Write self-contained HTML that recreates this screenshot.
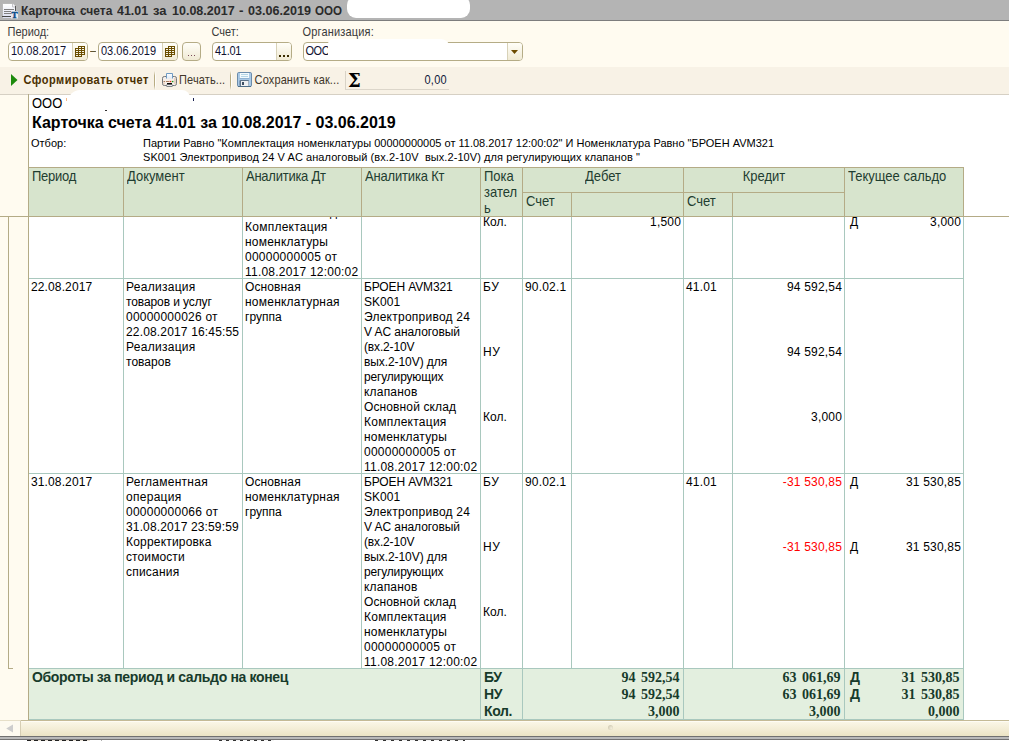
<!DOCTYPE html>
<html lang="ru">
<head>
<meta charset="utf-8">
<title>Карточка счета 41.01</title>
<style>
*{box-sizing:border-box;margin:0;padding:0}
html,body{width:1009px;height:741px;overflow:hidden;background:#fff}
body{position:relative;font-family:"Liberation Sans",sans-serif;font-size:12px;color:#000}
.abs{position:absolute}
#title{left:0;top:0;width:1009px;height:20px;background:#b4b4b4}
#titleline{left:0;top:20px;width:1009px;height:1px;background:#7d7d7d}
#title .t{left:0;top:4px;width:345px;height:14px;font-size:12px;line-height:14px;font-weight:bold;color:#2b2b2b;white-space:nowrap}
#form{left:0;top:21px;width:1009px;height:46px;background:#fffbf0}
.lbl{position:absolute;font-size:11px;line-height:13px;color:#3a3a3a;white-space:nowrap;transform:scaleY(1.12);transform-origin:0 10.3px}
.inp{position:absolute;height:19px;border:1px solid #b5ac86;border-radius:4px;background:#fff;font-size:11px;line-height:17px;padding-left:2px;white-space:nowrap;overflow:hidden;color:#101030}
.inp>span{display:inline-block;transform:translateY(0.5px) scaleY(1.12);transform-origin:0 12.3px}
.ib{position:absolute;top:0;right:0;width:15px;height:17px;border-left:1px solid #d8d2b8;background:linear-gradient(#fffef8,#f0ead4)}
.btn{position:absolute;height:19px;border:1px solid #b5ac86;border-radius:4px;background:linear-gradient(#fffef8,#f0ead4)}
#tb{left:0;top:67px;width:1009px;height:27px;background:#f8f2e6}
#tbline{left:0;top:94px;width:1009px;height:1px;background:#d6d0c4}
.tbt{position:absolute;top:7px;font-size:11px;line-height:13px;color:#40362a;white-space:nowrap;transform:scaleY(1.12);transform-origin:0 10.3px}
.sep{position:absolute;top:4px;width:2px;height:19px;background:linear-gradient(90deg,transparent 0,transparent 0) }
.sep:before{content:"";position:absolute;left:0;top:0;width:1px;height:19px;background:linear-gradient(rgba(184,172,130,0),#b8ac82 25%,#b8ac82 75%,rgba(184,172,130,0))}
.sep:after{content:"";position:absolute;left:1px;top:0;width:1px;height:19px;background:linear-gradient(rgba(255,255,255,0),#fffefb 25%,#fffefb 75%,rgba(255,255,255,0))}
#gut{left:0;top:95px;width:28px;height:625px;background:#fffbf0}
.vl{position:absolute;width:1px}
.hl{position:absolute;height:1px}
.h{position:absolute;font-size:13px;line-height:16px;color:#1f3d30;white-space:nowrap}
.h>span,.h>i{display:block;font-style:normal;height:16px;transform:scaleY(1.09);transform-origin:0 12.3px}
.g{background:#a9c8be}
.c{position:absolute;font-size:12px;line-height:15px;white-space:nowrap}
.r{text-align:right}
.n{letter-spacing:0.18px}
.red{color:#ff0000}
.ft{position:absolute;font-weight:bold;color:#173b2b;font-size:14px;line-height:17px;white-space:nowrap;letter-spacing:-0.34px}
.fs{position:absolute;font-family:"Liberation Serif",serif;font-weight:bold;color:#173b2b;font-size:14px;line-height:17px;white-space:nowrap;text-align:right;word-spacing:2px}
</style>
</head>
<body>
<!-- title bar -->
<div id="title" class="abs">
  <svg class="abs" style="left:0;top:0" width="20" height="20" viewBox="0 0 20 20">
    <defs><linearGradient id="dg" x1="0" y1="0" x2="0" y2="1"><stop offset="0" stop-color="#ffffff"/><stop offset="1" stop-color="#dcdff0"/></linearGradient></defs>
    <path d="M2.5 3.5h11l3 3v11.5h-14z" fill="#c8c8c8" opacity="0.6"/>
    <path d="M3 4h10l3 3v11H3z" fill="url(#dg)"/>
    <path d="M12.5 4v3H16" fill="#f4f4fa" stroke="#c4c4c8" stroke-width="1"/>
    <rect x="15" y="6" width="1" height="5" fill="#555"/>
    <rect x="4" y="9" width="10" height="1" fill="#808080"/>
    <rect x="4" y="11" width="7" height="1" fill="#808080"/>
    <rect x="4" y="13" width="7" height="1" fill="#808080"/>
    <rect x="2" y="16" width="10" height="1" fill="#484848"/>
    <rect x="11" y="11" width="7" height="7.5" fill="#e9e9ee"/>
    <text x="11.6" y="18" font-family="Liberation Serif,serif" font-size="9" font-weight="bold" fill="#0e4f88" stroke="#0e4f88" stroke-width="0.5">T</text>
  </svg>
  <div class="abs t"><span class="abs" style="left:21.0px;top:0">Карточка</span> <span class="abs" style="left:80.0px;top:0">счета</span> <span class="abs" style="left:117.0px;top:0;transform:scaleX(1.033);transform-origin:0 0">41.01</span> <span class="abs" style="left:153.0px;top:0;transform:scaleX(1.080);transform-origin:0 0">за</span> <span class="abs" style="left:171.5px;top:0;transform:scaleX(1.042);transform-origin:0 0">10.08.2017</span> <span class="abs" style="left:239.0px;top:0;transform:scaleX(1.120);transform-origin:0 0">-</span> <span class="abs" style="left:247.5px;top:0;transform:scaleX(1.047);transform-origin:0 0">03.06.2019</span> <span class="abs" style="left:315.0px;top:0;transform:scaleX(0.964);transform-origin:0 0">ООО</span></div>
  <div class="abs" style="left:347px;top:-4px;width:123px;height:22px;background:#fff;border-radius:9px"></div>
</div>
<div id="titleline" class="abs"></div>

<!-- form -->
<div id="form" class="abs">
  <div class="lbl" style="left:7.5px;top:5px">Период:</div>
  <div class="lbl" style="left:211.5px;top:5px">Счет:</div>
  <div class="lbl" style="left:302.5px;top:5px;letter-spacing:0.17px">Организация:</div>

  <div class="inp" style="left:8px;top:21px;width:80px"><span style="letter-spacing:0px">10.08.2017</span><div class="ib"><svg class="abs" style="left:2px;top:3px" width="10" height="11" viewBox="0 0 10 11"><path d="M3 0.5h7M0 2.5h10M0 4.5h10M0 6.5h10M0 8.5h10M0 10.5h7M0.5 2v9M3.5 0v11M6.5 0v11M9.5 0v9" fill="none" stroke="#6b4e00" stroke-width="1"/></svg></div></div>
  <div class="abs" style="left:90px;top:23px;width:6px;height:13px;font-size:11px;line-height:13px;color:#3a3000;overflow:hidden">–</div>
  <div class="inp" style="left:98px;top:21px;width:80px"><span style="letter-spacing:0px">03.06.2019</span><div class="ib"><svg class="abs" style="left:2px;top:3px" width="10" height="11" viewBox="0 0 10 11"><path d="M3 0.5h7M0 2.5h10M0 4.5h10M0 6.5h10M0 8.5h10M0 10.5h7M0.5 2v9M3.5 0v11M6.5 0v11M9.5 0v9" fill="none" stroke="#6b4e00" stroke-width="1"/></svg></div></div>
  <div class="btn" style="left:182px;top:21px;width:19px"><div class="abs" style="left:5px;top:12px;width:1px;height:1px;background:#7a4a5a;box-shadow:3px 0 #7a4a5a,6px 0 #7a4a5a"></div></div>
  <div class="inp" style="left:212px;top:21px;width:80px"><span style="letter-spacing:-0.3px">41.01</span><div class="ib"><div class="abs" style="left:2px;top:12px;width:2px;height:2px;background:#3a2c00;box-shadow:4px 0 #3a2c00,8px 0 #3a2c00"></div></div></div>
  <div class="inp" style="left:303px;top:21px;width:220px;padding-left:1.4px"><span style="letter-spacing:-0.35px">ООО</span><div class="ib"><svg class="abs" style="left:3px;top:7px" width="7" height="4" viewBox="0 0 7 4"><path d="M0 0h7L3.5 4z" fill="#6b4a00"/></svg></div></div>
  <div class="abs" style="left:328.4px;top:17.6px;width:121.6px;height:21px;background:#fff;border-radius:5px 9px 0 0"></div>
</div>

<!-- toolbar -->
<div id="tb" class="abs">
  <svg class="abs" style="left:10px;top:6px" width="8" height="14" viewBox="0 0 8 14"><path d="M1 1L7.5 7L1 13z" fill="#1c8a0c"/></svg>
  <div class="tbt" style="left:23.5px;font-weight:bold;color:#4a3000;letter-spacing:0.5px">Сформировать отчет</div>
  <div class="sep" style="left:154px"></div>
  <svg class="abs" style="left:162px;top:6px" width="15" height="14" viewBox="0 0 15 14">
    <defs><linearGradient id="pp" x1="0" y1="0" x2="0" y2="1"><stop offset="0" stop-color="#ffffff"/><stop offset="1" stop-color="#dfeaf5"/></linearGradient></defs>
    <rect x="0.5" y="3.5" width="14" height="9" rx="1.8" fill="#f6efe9" stroke="#74787c"/>
    <path d="M1.5 8.5h1.6M4 8.5h3" stroke="#a97f5e" stroke-width="1"/>
    <path d="M2 9.5v2M13 5v6" stroke="#d9b99f" stroke-width="1"/>
    <path d="M4.5 5.5v-5h6v5" fill="url(#pp)" stroke="#6f9bc4"/>
    <rect x="7.6" y="7.9" width="1.6" height="1.3" fill="#e8261c"/><rect x="9.8" y="7.9" width="1.6" height="1.3" fill="#1f9a1f"/>
    <rect x="5" y="10" width="5" height="2" fill="#0a0a0a"/>
    <rect x="4.5" y="11.7" width="6" height="1.8" rx="0.5" fill="#fff" stroke="#74787c" stroke-width="0.9"/>
  </svg>
  <div class="tbt" style="left:179px;letter-spacing:0.12px">Печать...</div>
  <div class="sep" style="left:230px"></div>
  <svg class="abs" style="left:237px;top:5px" width="15" height="15" viewBox="0 0 15 15">
    <rect x="0.5" y="0.5" width="14" height="14" rx="1.3" fill="#a9c9e6" stroke="#6b8cab"/>
    <path d="M1 14.5h13" stroke="#4d6d88" stroke-width="1"/>
    <rect x="3" y="1" width="9" height="5" fill="#f3fafd"/>
    <path d="M4 2.5h7M4 4.5h7" stroke="#b5d6e6" stroke-width="1"/>
    <path d="M2.5 6.5h10" stroke="#8fb2d2" stroke-width="1"/>
    <rect x="2.5" y="8" width="9.5" height="6" rx="1" fill="#5d7389"/>
    <rect x="4" y="9" width="7.5" height="5" fill="#eef0f2"/>
    <rect x="5" y="10" width="2" height="3" fill="#3d4f63"/>
  </svg>
  <div class="tbt" style="left:254.6px;letter-spacing:0.12px">Сохранить как...</div>
  <div class="abs" style="left:345px;top:4px;width:104px;height:19px;border-left:1px solid #d9d3c6;border-bottom:1px solid #dcd6ca"></div>
  <div class="abs" style="left:348.3px;top:1px;font-size:19px;line-height:24px;font-weight:bold;color:#000;font-family:'DejaVu Serif','Liberation Serif',serif;transform-origin:0 0;transform:scaleX(0.95)">Σ</div>
  <div class="tbt" style="left:424.5px;color:#10203a;letter-spacing:0.25px">0,00</div>
</div>
<div id="tbline" class="abs"></div>

<!-- gutter -->
<div id="gut" class="abs"></div>

<!-- report heading -->
<div class="c" style="left:32px;top:96px;font-size:13px;line-height:15px;transform:scaleY(1.1);transform-origin:0 11.8px">ООО</div>
<div class="abs" style="left:68px;top:90px;width:122px;height:15px;background:#fff;border-radius:12px 8px 0 0"></div>
<div class="abs" style="left:193px;top:98px;width:1px;height:3px;background:#1a2050"></div>
<div class="abs" style="left:66px;top:98px;width:1px;height:3px;background:#f3b98a"></div>
<div class="abs" style="left:105px;top:110px;width:2px;height:1px;background:#333"></div>
<div class="c" style="left:32px;top:113px;font-size:16px;font-weight:bold;line-height:19px">Карточка счета 41.01 за 10.08.2017 - 03.06.2019</div>
<div class="c" style="left:31px;top:136px;font-size:11px;line-height:14px">Отбор:</div>
<div class="c" style="left:143px;top:136px;font-size:11px;line-height:14px">Партии Равно "Комплектация номенклатуры 00000000005 от 11.08.2017 12:00:02" И Номенклатура Равно "БРОЕН AVM321<br><span style="letter-spacing:0.07px">SK001 Электропривод 24 V AC аналоговый (вх.2-10V&nbsp; вых.2-10V) для регулирующих клапанов "</span></div>


<!-- table header -->
<div class="abs" style="left:28px;top:167px;width:936px;height:50px;background:#d7e4cd"></div>
<div class="hl" style="left:28px;top:167px;width:936px;background:#b4ab86"></div>
<div class="hl" style="left:0;top:216px;width:1009px;background:#b4ab86"></div>
<div class="hl" style="left:522px;top:192px;width:322px;background:#b4ab86"></div>
<div class="vl" style="left:28px;top:94px;height:626px;background:#b4ab86"></div>
<div class="vl" style="left:123px;top:167px;height:49px;background:#b4ab86"></div>
<div class="vl" style="left:242px;top:167px;height:49px;background:#b4ab86"></div>
<div class="vl" style="left:361px;top:167px;height:49px;background:#b4ab86"></div>
<div class="vl" style="left:480px;top:167px;height:49px;background:#b4ab86"></div>
<div class="vl" style="left:522px;top:167px;height:49px;background:#b4ab86"></div>
<div class="vl" style="left:571px;top:192px;height:24px;background:#b4ab86"></div>
<div class="vl" style="left:683px;top:167px;height:49px;background:#b4ab86"></div>
<div class="vl" style="left:732px;top:192px;height:24px;background:#b4ab86"></div>
<div class="vl" style="left:844px;top:167px;height:49px;background:#b4ab86"></div>
<div class="vl" style="left:963px;top:167px;height:49px;background:#b4ab86"></div>
<div class="h" style="left:32px;top:169px"><span style="letter-spacing:-0.25px">Период</span></div>
<div class="h" style="left:127px;top:169px"><span>Документ</span></div>
<div class="h" style="left:246px;top:169px"><span style="letter-spacing:-0.25px">Аналитика Дт</span></div>
<div class="h" style="left:365px;top:169px"><span style="letter-spacing:-0.18px">Аналитика Кт</span></div>
<div class="h" style="left:484px;top:169px"><span>Пока</span><span>зател</span><span>ь</span></div>
<div class="h" style="left:848px;top:169px"><span>Текущее сальдо</span></div>
<div class="h" style="left:526px;top:194px"><span>Счет</span></div>
<div class="h" style="left:687px;top:194px"><span>Счет</span></div>
<div class="h" style="left:523px;top:169px;width:160px;text-align:center"><span>Дебет</span></div>
<div class="h" style="left:684px;top:169px;width:160px;text-align:center"><span>Кредит</span></div>
<!-- body grid -->
<div class="vl g" style="left:123px;top:217px;height:451px"></div>
<div class="vl g" style="left:242px;top:217px;height:451px"></div>
<div class="vl g" style="left:361px;top:217px;height:451px"></div>
<div class="vl g" style="left:571px;top:217px;height:451px"></div>
<div class="vl g" style="left:732px;top:217px;height:451px"></div>
<div class="vl g" style="left:480px;top:217px;height:503px"></div>
<div class="vl g" style="left:522px;top:217px;height:503px"></div>
<div class="vl g" style="left:683px;top:217px;height:503px"></div>
<div class="vl g" style="left:844px;top:217px;height:503px"></div>
<div class="vl g" style="left:963px;top:217px;height:503px"></div>
<div class="abs" style="left:29px;top:669px;width:935px;height:50px;background:#e3efdf"></div>
<div class="hl g" style="left:29px;top:278px;width:935px"></div>
<div class="hl g" style="left:29px;top:473px;width:935px"></div>
<div class="hl g" style="left:29px;top:668px;width:935px"></div>
<div class="hl g" style="left:29px;top:719px;width:935px"></div>
<div class="vl g" style="left:480px;top:669px;height:51px"></div>
<div class="vl g" style="left:522px;top:669px;height:51px"></div>
<div class="vl g" style="left:683px;top:669px;height:51px"></div>
<div class="vl g" style="left:844px;top:669px;height:51px"></div>
<div class="vl g" style="left:963px;top:669px;height:51px"></div>
<!-- row 1 (scrolled) -->
<div class="abs" style="left:245px;top:217px;width:116px;height:61px;overflow:hidden"><div class="c" style="left:0;top:-12px"><span style="letter-spacing:0.12px">Основной склад</span><br><span style="letter-spacing:0.25px">Комплектация</span><br><span style="letter-spacing:0.21px">номенклатуры</span><br><span style="letter-spacing:0.25px">00000000005 от</span><br><span style="letter-spacing:0.22px">11.08.2017 12:00:02</span></div></div>
<div class="c" style="left:483px;top:215px">Кол.</div>
<div class="c r n" style="left:572px;top:215px;width:109px">1,500</div>
<div class="c" style="left:850px;top:215px">Д</div>
<div class="c r n" style="left:870px;top:215px;width:91px">3,000</div>
<!-- row 2 -->
<div class="c" style="left:31px;top:280px"><span style="letter-spacing:0.12px">22.08.2017</span></div>
<div class="c" style="left:126px;top:280px"><span style="letter-spacing:0.28px">Реализация</span><br><span style="letter-spacing:-0.10px">товаров и услуг</span><br><span style="letter-spacing:0.22px">00000000026 от</span><br><span style="letter-spacing:0.16px">22.08.2017 16:45:55</span><br><span style="letter-spacing:0.28px">Реализация</span><br><span style="letter-spacing:0.03px">товаров</span></div>
<div class="c" style="left:245px;top:280px"><span style="letter-spacing:0.12px">Основная</span><br><span style="letter-spacing:0.23px">номенклатурная</span><br><span style="letter-spacing:0.04px">группа</span></div>
<div class="c" style="left:364px;top:280px"><span style="letter-spacing:-0.13px">БРОЕН AVM321</span><br><span style="letter-spacing:0.03px">SK001</span><br><span style="letter-spacing:0.24px">Электропривод 24</span><br><span style="letter-spacing:-0.07px">V AC аналоговый</span><br><span style="letter-spacing:-0.16px">(вх.2-10V</span><br><span style="letter-spacing:-0.08px">вых.2-10V) для</span><br><span style="letter-spacing:-0.17px">регулирующих</span><br><span style="letter-spacing:0.20px">клапанов</span><br><span style="letter-spacing:0.12px">Основной склад</span><br><span style="letter-spacing:0.25px">Комплектация</span><br><span style="letter-spacing:0.21px">номенклатуры</span><br><span style="letter-spacing:0.25px">00000000005 от</span><br><span style="letter-spacing:0.22px">11.08.2017 12:00:02</span></div>
<div class="c" style="left:483px;top:280px"><span style="letter-spacing:0.7px">БУ</span></div>
<div class="c" style="left:483px;top:345px"><span style="letter-spacing:0.5px">НУ</span></div>
<div class="c" style="left:483px;top:410px">Кол.</div>
<div class="c n" style="left:525px;top:280px">90.02.1</div>
<div class="c n" style="left:686px;top:280px">41.01</div>
<div class="c r n" style="left:733px;top:280px;width:109px">94 592,54</div>
<div class="c r n" style="left:733px;top:345px;width:109px">94 592,54</div>
<div class="c r n" style="left:733px;top:410px;width:109px">3,000</div>
<!-- row 3 -->
<div class="c" style="left:31px;top:475px"><span style="letter-spacing:0.12px">31.08.2017</span></div>
<div class="c" style="left:126px;top:475px"><span style="letter-spacing:0.26px">Регламентная</span><br><span style="letter-spacing:0.28px">операция</span><br><span style="letter-spacing:0.25px">00000000066 от</span><br><span style="letter-spacing:0.14px">31.08.2017 23:59:59</span><br><span style="letter-spacing:0.19px">Корректировка</span><br><span style="letter-spacing:0.10px">стоимости</span><br><span style="letter-spacing:0.22px">списания</span></div>
<div class="c" style="left:245px;top:475px"><span style="letter-spacing:0.12px">Основная</span><br><span style="letter-spacing:0.23px">номенклатурная</span><br><span style="letter-spacing:0.04px">группа</span></div>
<div class="c" style="left:364px;top:475px"><span style="letter-spacing:-0.13px">БРОЕН AVM321</span><br><span style="letter-spacing:0.03px">SK001</span><br><span style="letter-spacing:0.24px">Электропривод 24</span><br><span style="letter-spacing:-0.07px">V AC аналоговый</span><br><span style="letter-spacing:-0.16px">(вх.2-10V</span><br><span style="letter-spacing:-0.08px">вых.2-10V) для</span><br><span style="letter-spacing:-0.17px">регулирующих</span><br><span style="letter-spacing:0.20px">клапанов</span><br><span style="letter-spacing:0.12px">Основной склад</span><br><span style="letter-spacing:0.25px">Комплектация</span><br><span style="letter-spacing:0.21px">номенклатуры</span><br><span style="letter-spacing:0.25px">00000000005 от</span><br><span style="letter-spacing:0.22px">11.08.2017 12:00:02</span></div>
<div class="c" style="left:483px;top:475px"><span style="letter-spacing:0.7px">БУ</span></div>
<div class="c" style="left:483px;top:540px"><span style="letter-spacing:0.5px">НУ</span></div>
<div class="c" style="left:483px;top:605px">Кол.</div>
<div class="c n" style="left:525px;top:475px">90.02.1</div>
<div class="c n" style="left:686px;top:475px">41.01</div>
<div class="c r red n" style="left:733px;top:475px;width:109px">-31 530,85</div>
<div class="c r red n" style="left:733px;top:540px;width:109px">-31 530,85</div>
<div class="c" style="left:850px;top:475px">Д</div>
<div class="c" style="left:850px;top:540px">Д</div>
<div class="c r n" style="left:870px;top:475px;width:91px">31 530,85</div>
<div class="c r n" style="left:870px;top:540px;width:91px">31 530,85</div>
<!-- footer -->
<div class="ft" style="left:32px;top:669px">Обороты за период и сальдо на конец</div>
<div class="ft" style="left:484px;top:669px">БУ<br>НУ<br>Кол.</div>
<div class="fs" style="left:572px;top:669px;width:107.5px">94 592,54<br>94 592,54<br>3,000</div>
<div class="fs" style="left:733px;top:669px;width:107.5px">63 061,69<br>63 061,69<br>3,000</div>
<div class="ft" style="left:850px;top:669px">Д<br>Д</div>
<div class="fs" style="left:870px;top:669px;width:89.5px">31 530,85<br>31 530,85<br>0,000</div>
<!-- group bracket -->
<div class="vl" style="left:8px;top:217px;height:452px;background:#b4ab86"></div>
<div class="hl" style="left:8px;top:668px;width:5px;background:#b4ab86"></div>
<!-- scrollbar -->
<div class="abs" style="left:0;top:720px;width:1009px;height:16px;background:linear-gradient(#c4ba96 0,#c4ba96 1px,#fefcf4 1px,#fefcf4 2px,#faf6e6 2px,#f3edd6 9px,#ebe3c4 16px)"></div>
<div class="abs" style="left:0;top:720px;width:21px;height:16px;background:#fdfaf0;border-right:1px solid #d6ceb4;border-top:1px solid #e6dfc8"></div>
<svg class="abs" style="left:6px;top:724px" width="7" height="9" viewBox="0 0 7 9"><path d="M7 0.5L0.2 4.5L7 8.5z" fill="#cdcdcd"/></svg>
<div class="abs" style="left:608px;top:725px;width:5px;height:5px;border-radius:3px;background:radial-gradient(circle at 65% 65%,#f4efdc 0,#d8d2bc 60%,#cfc8b0 100%)"></div>
<div class="abs" style="left:0;top:736px;width:1009px;height:1px;background:#707070"></div>
<div class="abs" style="left:0;top:737px;width:1009px;height:2px;background:#b9b9b9"></div>
<div class="abs" style="left:0;top:739px;width:1009px;height:1px;background:#737373"></div>
<div class="abs" style="left:0;top:740px;width:1009px;height:1px;background:#fff"></div>
<div class="abs" style="left:27px;top:740px;width:63px;height:1px;background:repeating-linear-gradient(90deg,#222 0,#222 4px,#e9e1d6 4px,#e9e1d6 7px)"></div>
<div class="abs" style="left:101px;top:740px;width:1px;height:1px;background:#b0b0b0"></div>
<div class="abs" style="left:219px;top:740px;width:55px;height:1px;background:repeating-linear-gradient(90deg,#333 0,#333 3px,#f4f4f4 3px,#f4f4f4 7px)"></div>
<div class="abs" style="left:375px;top:740px;width:90px;height:1px;background:repeating-linear-gradient(90deg,#333 0,#333 3px,#f4f4f4 3px,#f4f4f4 8px)"></div>

</body>
</html>
